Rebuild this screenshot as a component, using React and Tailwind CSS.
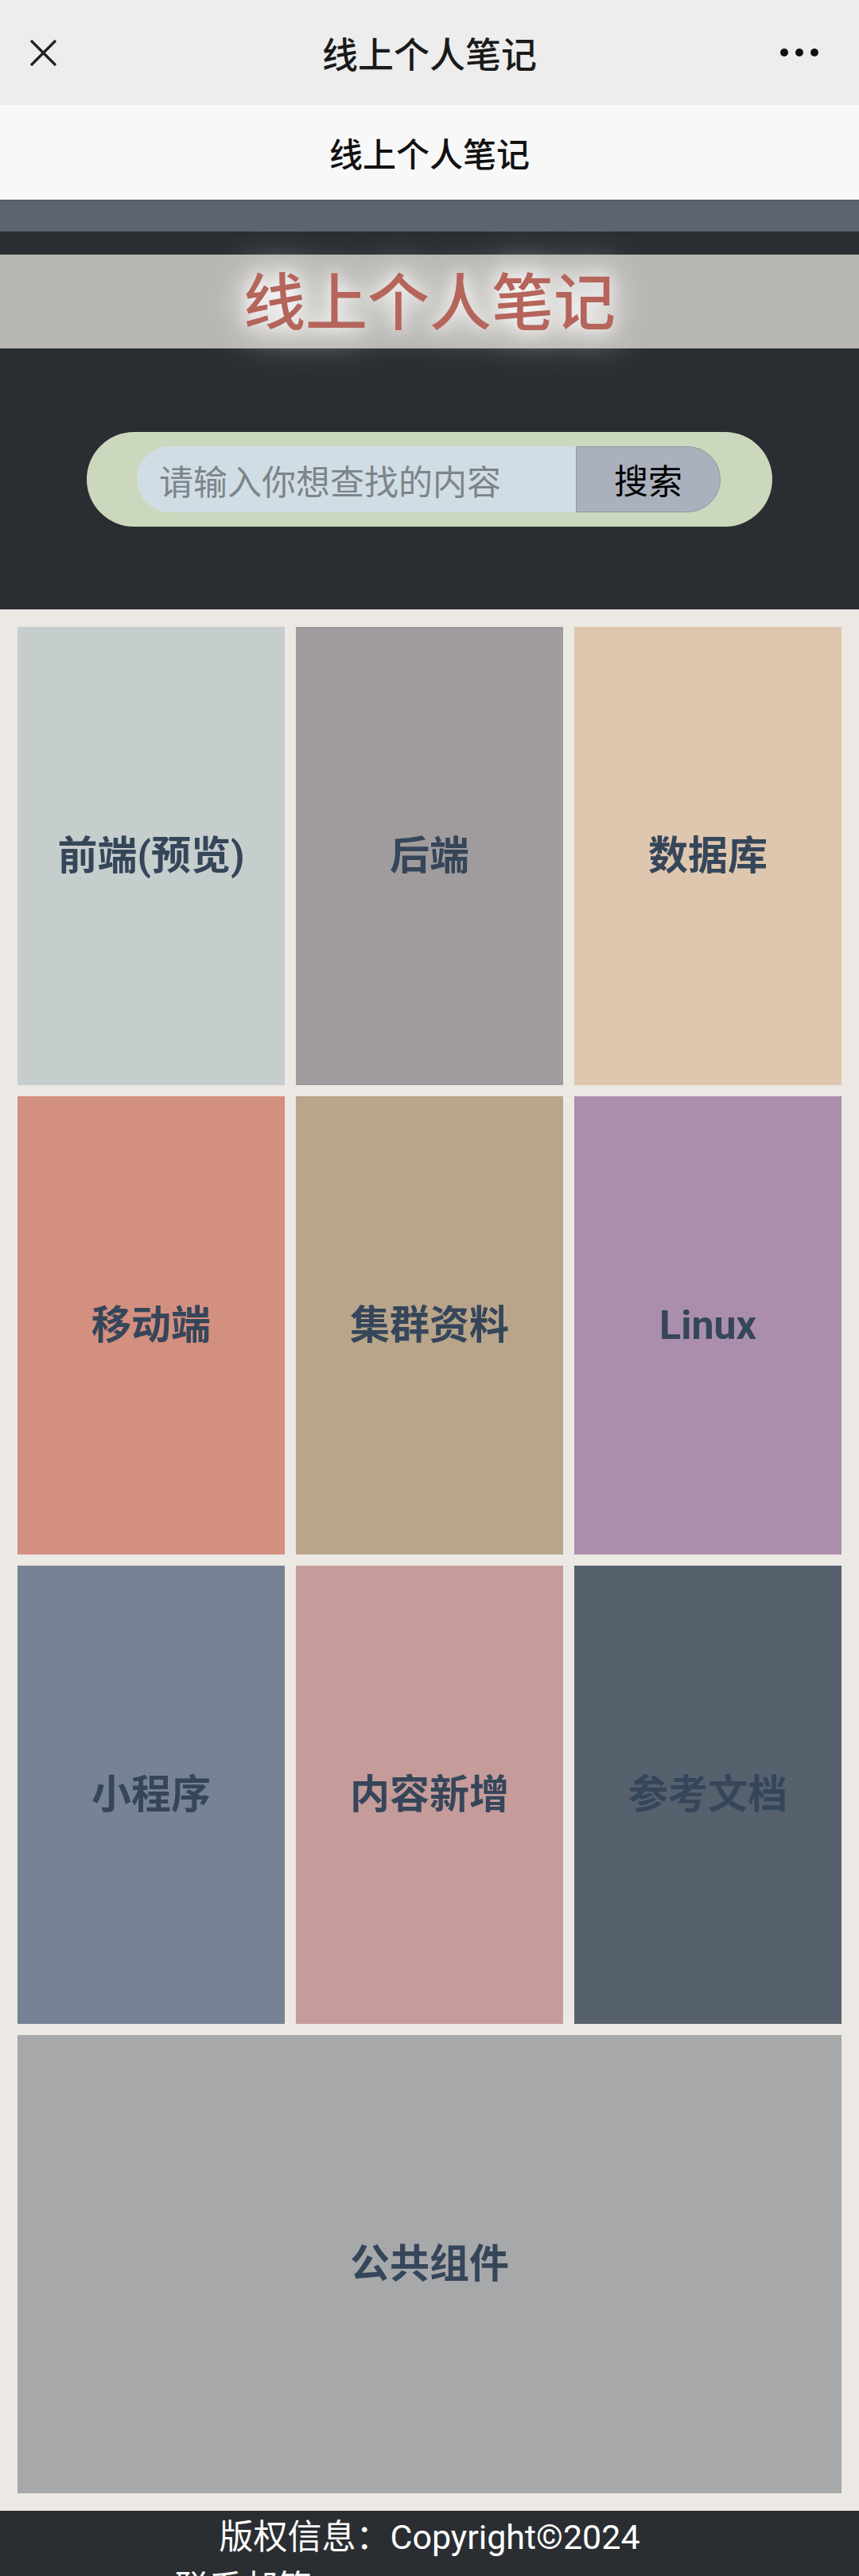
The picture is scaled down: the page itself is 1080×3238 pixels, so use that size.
import React from "react";

const cells = [
  { label: "前端(预览)", bg: "bg-[#c5cecc]" },
  { label: "后端", bg: "bg-[#a09c9d]" },
  { label: "数据库", bg: "bg-[#dec7ae]" },
  { label: "移动端", bg: "bg-[#d38f7f]" },
  { label: "集群资料", bg: "bg-[#b8a58a]" },
  { label: "Linux", bg: "bg-[#ab8eab]" },
  { label: "小程序", bg: "bg-[#778294]" },
  { label: "内容新增", bg: "bg-[#c59c9a]" },
  { label: "参考文档", bg: "bg-[#57616e]" },
];

const font = "font-['Roboto','Noto_Sans_CJK_SC',sans-serif]";

export default function App() {
  return (
    <div className={`w-[1080px] min-h-[3238px] bg-[#ece8e3] ${font}`}>
      {/* WeChat top bar */}
      <div className="h-[132px] bg-[#ededed] grid grid-cols-[1fr_auto_1fr] items-center px-[37px]">
        <svg width="35" height="35" viewBox="0 0 35 35" className="shrink-0">
          <path d="M2 2 L33 33 M33 2 L2 33" stroke="#222" strokeWidth="3.2" strokeLinecap="butt" />
        </svg>
        <div className="text-[45px] leading-none text-[#1a1a1a] font-medium font-['Noto_Sans_CJK_SC',sans-serif]">
          线上个人笔记
        </div>
        <div className="flex items-center justify-end gap-[9px] pr-[14px]">
          <span className="w-[10px] h-[10px] rounded-full bg-[#111]" />
          <span className="w-[10px] h-[10px] rounded-full bg-[#111]" />
          <span className="w-[10px] h-[10px] rounded-full bg-[#111]" />
        </div>
      </div>

      {/* Page title bar */}
      <div className="h-[119px] bg-[#f8f8f8] flex items-center justify-center">
        <div className="text-[42px] leading-none text-[#111] font-medium font-['Noto_Sans_CJK_SC',sans-serif]">
          线上个人笔记
        </div>
      </div>

      {/* gray strip */}
      <div className="h-[40px] bg-[#5b6470] border-t border-[#4e5660]" />

      {/* dark header */}
      <div className="h-[475px] bg-[#2a2e32] pt-[29px] flex flex-col">
        <div className="h-[118px] bg-[#b8b6b1] flex items-center justify-center pb-[8px]">
          <div className="text-[78px] leading-none font-medium text-[#b5655b] font-['Noto_Sans_CJK_SC',sans-serif] [text-shadow:0_0_20px_#ffffff,0_0_40px_#ffffff,0_0_60px_#ffffff]">
            线上个人笔记
          </div>
        </div>
        <div className="mt-[105px] mx-auto w-[862px] h-[119px] rounded-full bg-[#cbd8bd] flex items-center pl-[63px] pr-[65px]">
          <input
            type="text"
            placeholder="请输入你想查找的内容"
            className="h-[83px] flex-1 min-w-0 bg-[#d1dde4] rounded-l-full pl-[28px] text-[43px] text-[#333] placeholder:text-[#7d848b] outline-none font-['Noto_Sans_CJK_SC',sans-serif]"
          />
          <button className="h-[83px] w-[182px] bg-[#aab1bd] border border-[#8e949c] rounded-r-full text-[43px] text-black flex items-center justify-center font-['Noto_Sans_CJK_SC',sans-serif]">
            搜索
          </button>
        </div>
      </div>

      {/* grid */}
      <div className="p-[22px] grid grid-cols-3 gap-[14px]">
        {cells.map((c) => (
          <div
            key={c.label}
            className={`${c.bg} h-[576px] flex items-center justify-center text-[50px] font-bold text-[#36465a]`}
          >
            {c.label}
          </div>
        ))}
        <div className="col-span-3 bg-[#a7a8aa] h-[576px] flex items-center justify-center text-[50px] font-bold text-[#36465a]">
          公共组件
        </div>
      </div>

      {/* footer */}
      <div className="bg-[#2a2e32] text-white text-[43px] leading-[64px] text-center pt-[1px] pb-[20px] font-['Roboto','Noto_Sans_CJK_SC',sans-serif]">
        <div>版权信息：Copyright©2024</div>
        <div>联系邮箱：1784636542@qq.com</div>
      </div>
    </div>
  );
}
